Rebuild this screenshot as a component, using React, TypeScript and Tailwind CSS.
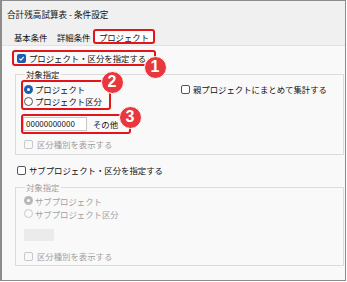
import React from 'react';

const FONT = { fontFamily: '"Noto Sans CJK JP", "Noto Sans", sans-serif' };

function Check({ checked = false, disabled = false }: { checked?: boolean; disabled?: boolean }) {
  if (checked) {
    return (
      <span className="flex h-[9px] w-[9px] shrink-0 items-center justify-center rounded-[2px] bg-[#1a5fb4]">
        <svg width="7" height="7" viewBox="0 0 10 10">
          <path d="M2 5.2 L4.2 7.4 L8.2 2.8" fill="none" stroke="white" strokeWidth="1.6" />
        </svg>
      </span>
    );
  }
  return (
    <span
      className={`h-[9px] w-[9px] shrink-0 rounded-[2px] border ${disabled ? 'border-[#c8c8c8] bg-[#f9f9f9]' : 'border-[#555] bg-white'}`}
    />
  );
}

function Radio({ checked = false, disabled = false }: { checked?: boolean; disabled?: boolean }) {
  if (checked) {
    return (
      <span className={`flex h-[9px] w-[9px] shrink-0 items-center justify-center rounded-full ${disabled ? 'bg-[#b8b8b8]' : 'bg-[#1a5fb4]'}`}>
        <span className="h-[3px] w-[3px] rounded-full bg-white" />
      </span>
    );
  }
  return (
    <span className={`h-[9px] w-[9px] shrink-0 rounded-full border ${disabled ? 'border-[#c8c8c8]' : 'border-[#555] bg-white'}`} />
  );
}

function Badge({ n, x, y }: { n: number; x: number; y: number }) {
  return (
    <div
      className="absolute flex h-[23px] w-[23px] items-center justify-center rounded-full border border-white bg-[#e8383d] text-[16px] font-bold leading-none text-white"
      style={{ left: x - 11.5, top: y - 11.5, fontFamily: '"Liberation Sans", Arial, sans-serif' }}
    >
      {n}
    </div>
  );
}

export default function App() {
  return (
    <div
      className="relative h-[282px] w-[347px] overflow-hidden bg-white text-[8.4px] leading-[12px] text-[#111]"
      style={FONT}
    >
      <div className="flex h-[281px] w-[346px] flex-col border-b border-l-[2px] border-r border-t border-[#8c8c8c] bg-[#f0f0f0]">
        {/* title */}
        <div className="flex h-[25px] items-center pl-[5px] text-[8.6px]">合計残高試算表 - 条件設定</div>

        {/* tabs */}
        <div className="flex h-[19px] items-end">
          <div className="mb-[2px] ml-[12px] w-[43px]">基本条件</div>
          <div className="mb-[2px] w-[36px]">詳細条件</div>
          <div className="mb-[1px] flex h-[15px] w-[62px] items-center justify-center rounded-[3px] border-2 border-[#e5141b] bg-white">
            プロジェクト
          </div>
        </div>

        {/* content */}
        <div className="flex flex-1 flex-col border-t border-[#e2e2e2] bg-[#f9f9f9]">
          <div className="ml-[10px] mt-[4px] flex h-[16px] w-[144px] items-center gap-[3px] rounded-[3px] border-2 border-[#e5141b] pl-[3px]">
            <Check checked />
            <span>プロジェクト・区分を指定する</span>
          </div>

          <fieldset className="mr-[1px] ml-[13px] mt-[3px] border border-[#dcdcdc] px-[5px] pb-[4px]">
            <legend className="ml-[4px] px-[1px] leading-[11px]">対象指定</legend>
            <div className="flex">
              <div className="flex flex-col">
                <div className="flex h-[30px] w-[90px] flex-col rounded-[3px] border-2 border-[#e5141b] pl-[1px] pt-[1px]">
                  <div className="flex h-[12px] items-center gap-[2px]">
                    <Radio checked />
                    <span>プロジェクト</span>
                  </div>
                  <div className="flex h-[12px] items-center gap-[2px]">
                    <Radio />
                    <span>プロジェクト区分</span>
                  </div>
                </div>
                <div className="mt-[4px] flex h-[20px] w-[110px] items-center gap-[6px] rounded-[3px] border-2 border-[#e5141b]">
                  <div className="flex h-[14px] w-[64px] items-center border border-[#c8c8c8] bg-white pl-[2px] text-[8px]">
                    00000000000
                  </div>
                  <span>その他</span>
                </div>
                <div className="mt-[4px] flex h-[12px] items-center gap-[4px] pl-[3px] text-[#9c9c9c]">
                  <Check disabled />
                  <span>区分種別を表示する</span>
                </div>
              </div>
              <div className="ml-[50px] mt-[3px] flex h-[12px] items-center gap-[3px]">
                <Check />
                <span>親プロジェクトにまとめて集計する</span>
              </div>
            </div>
          </fieldset>

          <div className="ml-[15px] mt-[9px] flex h-[12px] items-center gap-[3px]">
            <Check />
            <span>サブプロジェクト・区分を指定する</span>
          </div>

          <fieldset className="mr-[1px] ml-[13px] mt-[6px] border border-[#dcdcdc] px-[5px] pb-[3px] text-[#a0a0a0]">
            <legend className="ml-[4px] px-[1px] leading-[11px]">対象指定</legend>
            <div className="flex flex-col pl-[3px] pt-[1px]">
              <div className="flex h-[13px] items-center gap-[2px]">
                <Radio checked disabled />
                <span>サブプロジェクト</span>
              </div>
              <div className="flex h-[13px] items-center gap-[2px]">
                <Radio disabled />
                <span>サブプロジェクト区分</span>
              </div>
              <div className="mt-[9px] h-[12px] w-[30px] bg-[#ebebeb]" />
              <div className="mt-[9px] flex h-[12px] items-center gap-[4px]">
                <Check disabled />
                <span>区分種別を表示する</span>
              </div>
            </div>
          </fieldset>
        </div>
      </div>

      <Badge n={1} x={155} y={67} />
      <Badge n={2} x={112} y={82} />
      <Badge n={3} x={130} y={117} />
    </div>
  );
}
